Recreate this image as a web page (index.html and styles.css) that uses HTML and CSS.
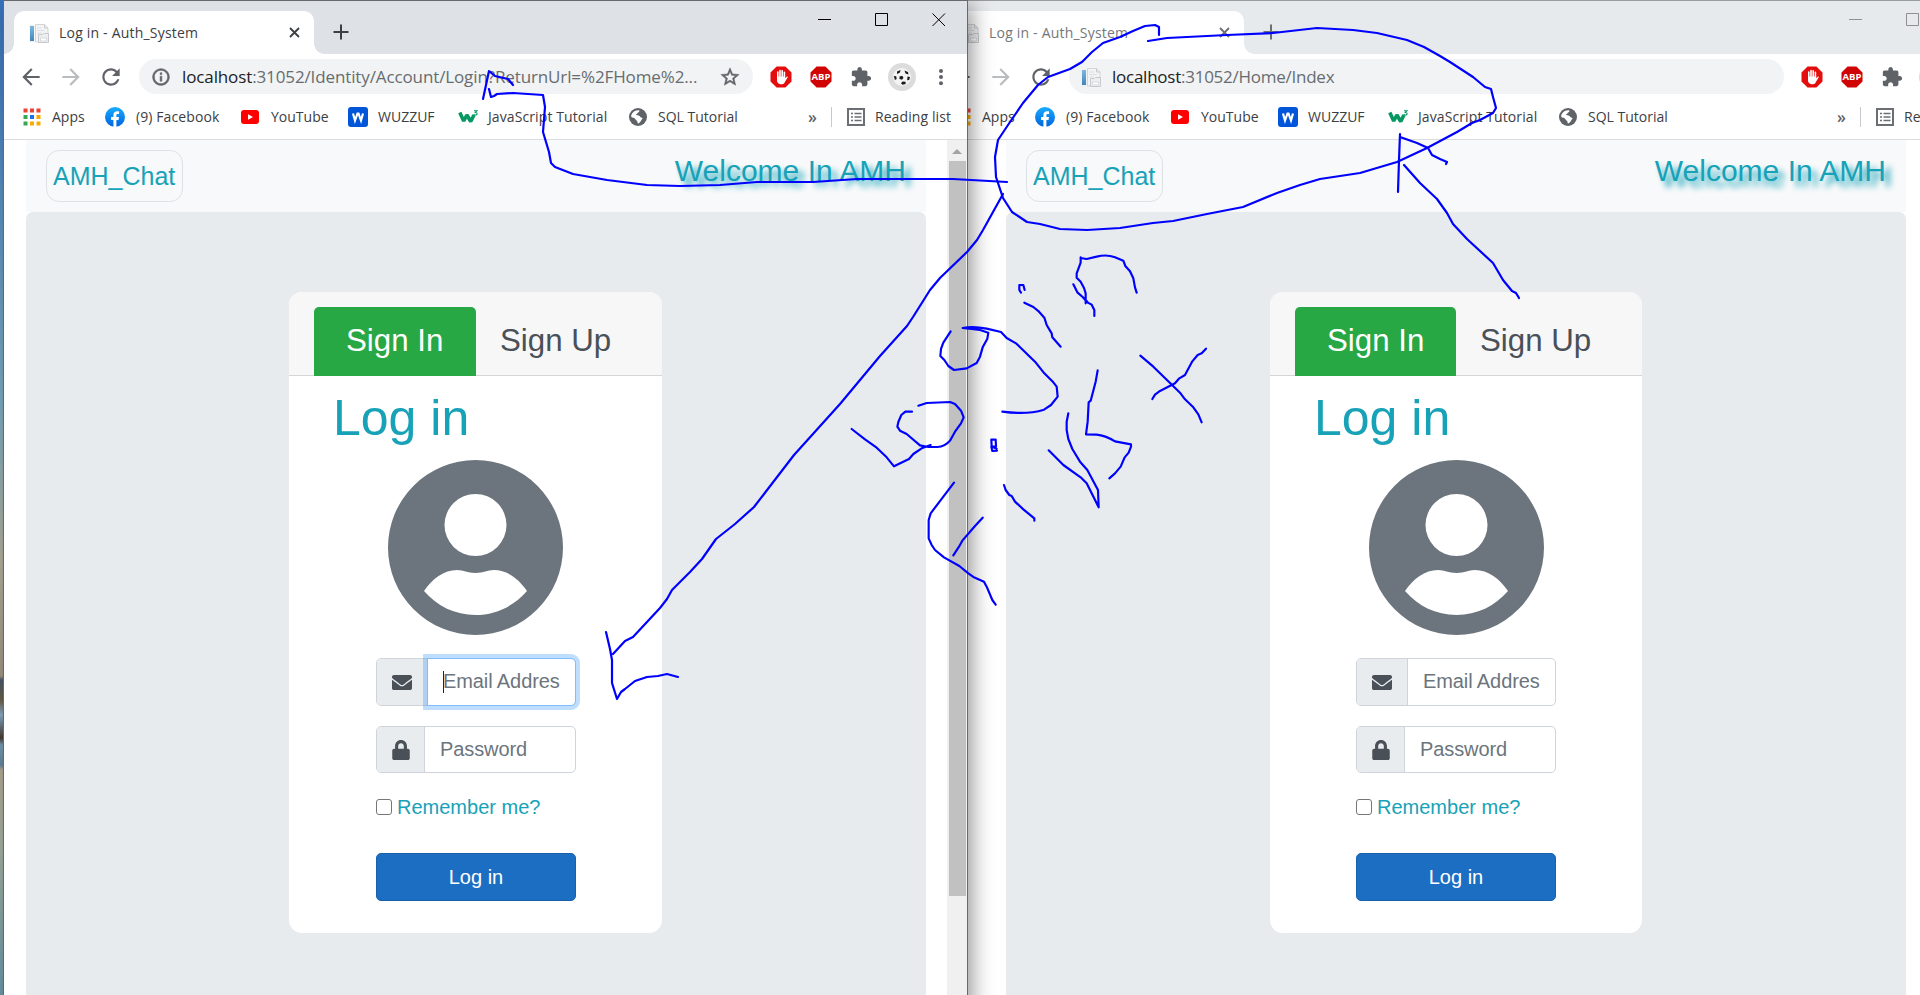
FILE: index.html
```
<!DOCTYPE html>
<html lang="en">
<head>
<meta charset="utf-8">
<title>Log in - Auth_System</title>
<link rel="stylesheet" href="styles.css">
</head>
<body>
<svg class="sprite" aria-hidden="true">
  <defs>
    <linearGradient id="fbg" x1="0" y1="0" x2="0" y2="1"><stop offset="0" stop-color="#18acfe"/><stop offset="1" stop-color="#0163e0"/></linearGradient>
    <linearGradient id="bar" x1="0" y1="0" x2="0" y2="1"><stop offset="0" stop-color="#7fb7dd"/><stop offset="1" stop-color="#3f86bd"/></linearGradient>
  </defs>
  <symbol id="favicon" viewBox="0 0 20 20"><rect x="0.5" y="2" width="5" height="17.500" fill="#eef1f4"/><rect x="1" y="3" width="4" height="15" fill="url(#bar)"/><path d="M6.500 1.500h9l3.500 3.500v14H6.500z" fill="#f4f4f5" stroke="#d3d5d8"/><path d="M15.500 1.500V5H19" fill="none" stroke="#c8cacd"/><path d="M8 5h5M8 7.500h8M8 10h5" stroke="#dcdfe3"/><path d="M9.500 11.500h4l1-1h5v9h-10z" fill="#eceef0" stroke="#c6c9cd"/><path d="M11.500 15h6v3h-6z" fill="#fff" stroke="#d8dade"/></symbol>
  <symbol id="back" viewBox="0 0 24 24"><path d="M20 11H7.830l5.590-5.590L12 4l-8 8 8 8 1.410-1.410L7.830 13H20v-2z"/></symbol>
  <symbol id="reload" viewBox="0 0 24 24"><path d="M17.650 6.350C16.200 4.900 14.210 4 12 4c-4.420 0-7.990 3.580-7.990 8s3.570 8 7.990 8c3.730 0 6.840-2.550 7.730-6h-2.080c-.82 2.330-3.040 4-5.650 4-3.310 0-6-2.690-6-6s2.690-6 6-6c1.660 0 3.140.69 4.220 1.780L13 11h7V4l-2.350 2.350z"/></symbol>
  <symbol id="info" viewBox="0 0 24 24"><path d="M11 17h2v-6h-2v6zm1-15C6.480 2 2 6.480 2 12s4.480 10 10 10 10-4.480 10-10S17.520 2 12 2zm0 18c-4.410 0-8-3.590-8-8s3.590-8 8-8 8 3.590 8 8-3.590 8-8 8zM11 9h2V7h-2v2z" stroke="#5f6368" stroke-width=".7"/></symbol>
  <symbol id="star" viewBox="0 0 24 24"><path d="M22 9.240l-7.190-.62L12 2 9.190 8.630 2 9.240l5.460 4.730L5.820 21 12 17.270 18.180 21l-1.630-7.030L22 9.240zM12 15.400l-3.760 2.270 1-4.280-3.320-2.880 4.380-.38L12 6.100l1.710 4.040 4.380.38-3.320 2.880 1 4.280L12 15.400z" stroke="#5f6368" stroke-width=".5"/></symbol>
  <symbol id="hand" viewBox="0 0 22 22"><path d="M6.600.5h8.800l6.100 6.100v8.800l-6.100 6.100H6.600L.5 15.400V6.600z" fill="#e40d0d"/><path d="M7.800 11.500V6M10 10.500V4.500M12.200 10.500V4.700M14.400 11V6.200" stroke="#fff" stroke-width="1.600" stroke-linecap="round"/><path d="M7 10.500h8.200v1.700l1.500-1.500c.8-.5 1.300.2.9.9l-3 5c-.5.9-1.200 1.600-2.600 1.600h-1.500c-2 0-3.500-1.500-3.500-3.600z" fill="#fff"/></symbol>
  <symbol id="octagon" viewBox="0 0 22 22"><path d="M6.600.5h8.800l6.100 6.100v8.800l-6.100 6.100H6.600L.5 15.400V6.600z" fill="#d00404"/></symbol>
  <symbol id="puzzle" viewBox="0 0 24 24"><path d="M20.500 11H19V7c0-1.100-.9-2-2-2h-4V3.500C13 2.120 11.880 1 10.500 1S8 2.120 8 3.500V5H4c-1.100 0-1.990.9-1.990 2v3.800H3.500c1.490 0 2.700 1.210 2.700 2.700s-1.210 2.700-2.700 2.700H2V20c0 1.100.9 2 2 2h3.800v-1.500c0-1.490 1.210-2.700 2.700-2.700 1.490 0 2.700 1.210 2.700 2.700V22H17c1.100 0 2-.9 2-2v-4h1.500c1.380 0 2.500-1.120 2.500-2.500S21.880 11 20.500 11z"/></symbol>
  <symbol id="ball" viewBox="0 0 28 28"><circle cx="14" cy="14" r="14" fill="#dcdcdc"/><circle cx="14" cy="14" r="9" fill="#f4f4f4"/><path d="M9 8.500l3.500-1.500-.5 2.500-3 1.500zM16.500 7.500l3.500 1.500.5 2.500-3-1zM5.800 13l2.400.3.500 2.700-1.800 1zM11.500 13.500l2.700-.8 1.300 2-1.500 2-2.500-.7zM19.500 13.500l2.500.5-.8 3-2 .3zM14.500 18.500l3 .2.200 2.300-3.200.8-1.500-1.500z" fill="#1c1c1c"/></symbol>
  <symbol id="dots" viewBox="0 0 6 18"><g><circle cx="3" cy="3" r="2"/><circle cx="3" cy="9.100" r="2"/><circle cx="3" cy="15.200" r="2"/></g></symbol>
  <symbol id="apps" viewBox="0 0 18 18"><path d="M.5.500h4v4h-4zM7 .5h4v4H7zM13.500.500h4v4h-4z" fill="#ea4335"/><path d="M.5 7h4v4h-4z M.5 13.500h4v4h-4z" fill="#34a853"/><path d="M7 7h4v4H7z" fill="#1a73e8"/><path d="M13.500 7h4v4h-4zM7 13.500h4v4H7zM13.500 13.500h4v4h-4z" fill="#f9ab00"/></symbol>
  <symbol id="facebook" viewBox="0 0 20 20"><circle cx="10" cy="10" r="10" fill="url(#fbg)"/><path d="M8.400 20v-7H6.100v-3h2.300V8.200c0-2.600 1.400-4 3.800-4 .7 0 1.400.1 1.900.2v2.500h-1.300c-1 0-1.400.5-1.400 1.400V10h2.600l-.5 3h-2.100v7z" fill="#fff"/></symbol>
  <symbol id="youtube" viewBox="0 0 18 14"><rect width="18" height="14" rx="3" fill="#f00"/><path d="M7 4.200v5.600L12 7z" fill="#fff"/></symbol>
  <symbol id="wuzzuf" viewBox="0 0 20 20"><rect width="20" height="20" rx="3" fill="#0055d9"/><path d="M5 6.500l2 7 2.500-7h1l2.500 7 2-7" fill="none" stroke="#fff" stroke-width="2.200"/></symbol>
  <symbol id="wthree" viewBox="0 0 20 20"><path d="M1.800 5.500L5.700 14l3.200-6 3.800 6.500 3.300-6.500" fill="none" stroke="#059862" stroke-width="3.600" stroke-linejoin="bevel"/><path d="M16 3.700h3l-1.600 1.700c2.400 0 2 3-.2 2.600-.7 0-1.200-.4-1.500-.8" fill="none" stroke="#059862" stroke-width="1.100"/></symbol>
  <symbol id="globe" viewBox="0 0 18 18"><circle cx="9" cy="9" r="9" fill="#5f6368"/><path d="M10 2.300c.9.800.2 1.800-.8 2.100-1 .3-.4 1.300-1.400 1.500-.9.200-1.100.7-.4 1.100 1.400.6 3.200.3 3.800 1.700.3 1 1.600.6 2.200 1.300.4.700-.6 1.300-1 2-.6 1.200-1.500 2.700-3.100 3.400-.9.200-.6-1.200-.9-2-.5-1-1.900-1.200-2.100-2.300-.8-1-2.900-1.400-4-2C1.800 5.500 5.300 1.900 10 2.300z" fill="#fff"/></symbol>
  <symbol id="list" viewBox="0 0 18 18"><rect x="1" y="1" width="16" height="16" fill="none" stroke="#6b6f73" stroke-width="2"/><path d="M4 5.500h2M7.500 5.500h7M4 9h2M7.500 9h7M4 12.500h2M7.500 12.500h7" stroke="#6b6f73" stroke-width="1.600"/></symbol>
  <symbol id="avatar" viewBox="0 0 175 175"><path fill-rule="evenodd" fill="#6c757d" d="M87.500 0a87.500 87.500 0 1 0 0 175a87.500 87.500 0 1 0 0-175zM87.500 34a31 31 0 1 1 0 62a31 31 0 1 1 0-62zM36 131C44 119 56 110 69 110C76 110 79 113 87.500 113C96 113 99 110 106 110C119 110 131 119 139 131C126 146 108 155 87.500 155S49 146 36 131z"/></symbol>
  <symbol id="mail" viewBox="0 64 512 384"><path d="M502.300 190.800c3.900-3.100 9.700-.2 9.700 4.700V400c0 26.500-21.500 48-48 48H48c-26.500 0-48-21.500-48-48V195.600c0-5 5.700-7.800 9.700-4.700 22.400 17.400 52.100 39.500 154.100 113.600 21.100 15.400 56.700 47.800 92.200 47.600 35.700.3 72-32.800 92.300-47.600 102-74.100 131.600-96.300 154-113.700zM256 320c23.200.4 56.600-29.200 73.400-41.400 132.700-96.300 142.800-104.700 173.400-128.700 5.800-4.500 9.200-11.500 9.200-18.900v-19c0-26.500-21.500-48-48-48H48c-26.500 0-48 21.500-48 48v19c0 7.400 3.400 14.300 9.200 18.900 30.600 23.900 40.700 32.400 173.400 128.700 16.800 12.200 50.200 41.800 73.400 41.400z"/></symbol>
  <symbol id="lock" viewBox="0 0 448 512"><path d="M400 224h-24v-72C376 68.200 307.800 0 224 0S72 68.200 72 152v72H48c-26.500 0-48 21.500-48 48v192c0 26.500 21.500 48 48 48h352c26.500 0 48-21.500 48-48V272c0-26.500-21.500-48-48-48zm-104 0H152v-72c0-39.700 32.300-72 72-72s72 32.300 72 72v72z"/></symbol>
</svg>

<div class="desktop">
  <section class="window window-back">
    <header class="titlebar">
      <div class="tab"><svg class="tab-icon"><use href="#favicon"/></svg><span class="tab-title">Log in - Auth_System</span><svg class="tab-close" viewBox="0 0 11 11"><path d="M1 1l9 9M10 1l-9 9"/></svg></div>
      <svg class="new-tab" viewBox="0 0 16 16"><path d="M8 .5v15M.5 8h15"/></svg>
      <div class="controls">
        <svg viewBox="0 0 14 14"><path d="M0 6.500h13"/></svg>
        <svg viewBox="0 0 14 14"><path d="M.5.500h12v12H.5z"/></svg>
        <svg viewBox="0 0 14 14"><path d="M.5.500l12.500 12.500M13 .5L.5 13"/></svg>
      </div>
    </header>
    <div class="toolbar">
      <svg class="nav"><use href="#back"/></svg><svg class="nav forward"><use href="#back"/></svg><svg class="nav"><use href="#reload"/></svg>
      <div class="address"><svg class="site"><use href="#favicon"/></svg><span class="url url-short"><b>localhost</b>:31052/Home/Index</span></div>
      <svg class="ext"><use href="#hand"/></svg>
      <span class="abp"><svg class="ext"><use href="#octagon"/></svg><span>ABP</span></span>
      <svg class="puzzle"><use href="#puzzle"/></svg><svg class="ball"><use href="#ball"/></svg><svg class="dots"><use href="#dots"/></svg>
    </div>
    <nav class="bookmarks">
      <svg class="i18"><use href="#apps"/></svg><span class="b-apps">Apps</span>
      <svg class="i20"><use href="#facebook"/></svg><span class="b-fb">(9) Facebook</span>
      <svg class="yt"><use href="#youtube"/></svg><span class="b-yt">YouTube</span>
      <svg class="i20"><use href="#wuzzuf"/></svg><span class="b-wz">WUZZUF</span>
      <svg class="i20"><use href="#wthree"/></svg><span class="b-js">JavaScript Tutorial</span>
      <svg class="i18"><use href="#globe"/></svg><span class="b-sql">SQL Tutorial</span>
      <span class="more">»</span><svg class="list i18"><use href="#list"/></svg><span class="b-read">Reading list</span>
    </nav>
    <main class="page">
      <div class="container">
        <div class="site-head"><a class="brand">AMH_Chat</a><h2 class="welcome">Welcome In AMH</h2></div>
        <div class="stage">
          <div class="card">
            <div class="card-head"><a class="pill active">Sign In</a><a class="pill">Sign Up</a></div>
            <h1>Log in</h1>
            <svg class="avatar"><use href="#avatar"/></svg>
            <form>
              <div class="field"><span class="addon addon-mail"><svg><use href="#mail"/></svg></span><span class="input"><span>Email Address</span></span></div>
              <div class="field field-pass"><span class="addon addon-lock"><svg><use href="#lock"/></svg></span><span class="input"><span>Password</span></span></div>
              <label><i class="check"></i>Remember me?</label>
              <button type="button">Log in</button>
            </form>
          </div>
        </div>
      </div>
    </main>
  </section>

  <section class="window window-front">
    <header class="titlebar">
      <div class="tab"><svg class="tab-icon"><use href="#favicon"/></svg><span class="tab-title">Log in - Auth_System</span><svg class="tab-close" viewBox="0 0 11 11"><path d="M1 1l9 9M10 1l-9 9"/></svg></div>
      <svg class="new-tab" viewBox="0 0 16 16"><path d="M8 .5v15M.5 8h15"/></svg>
      <div class="controls">
        <svg viewBox="0 0 14 14"><path d="M0 6.500h13"/></svg>
        <svg viewBox="0 0 14 14"><path d="M.5.500h12v12H.5z"/></svg>
        <svg viewBox="0 0 14 14"><path d="M.5.500l12.500 12.500M13 .5L.5 13"/></svg>
      </div>
    </header>
    <div class="toolbar">
      <svg class="nav"><use href="#back"/></svg><svg class="nav forward"><use href="#back"/></svg><svg class="nav"><use href="#reload"/></svg>
      <div class="address"><svg class="site"><use href="#info"/></svg><span class="url url-long"><b>localhost</b>:31052/Identity/Account/Login?ReturnUrl=%2FHome%2...</span><svg class="star"><use href="#star"/></svg></div>
      <svg class="ext"><use href="#hand"/></svg>
      <span class="abp"><svg class="ext"><use href="#octagon"/></svg><span>ABP</span></span>
      <svg class="puzzle"><use href="#puzzle"/></svg><svg class="ball"><use href="#ball"/></svg><svg class="dots"><use href="#dots"/></svg>
    </div>
    <nav class="bookmarks">
      <svg class="i18"><use href="#apps"/></svg><span class="b-apps">Apps</span>
      <svg class="i20"><use href="#facebook"/></svg><span class="b-fb">(9) Facebook</span>
      <svg class="yt"><use href="#youtube"/></svg><span class="b-yt">YouTube</span>
      <svg class="i20"><use href="#wuzzuf"/></svg><span class="b-wz">WUZZUF</span>
      <svg class="i20"><use href="#wthree"/></svg><span class="b-js">JavaScript Tutorial</span>
      <svg class="i18"><use href="#globe"/></svg><span class="b-sql">SQL Tutorial</span>
      <span class="more">»</span><svg class="list i18"><use href="#list"/></svg><span class="b-read">Reading list</span>
    </nav>
    <main class="page">
      <div class="container">
        <div class="site-head"><a class="brand">AMH_Chat</a><h2 class="welcome">Welcome In AMH</h2></div>
        <div class="stage">
          <div class="card">
            <div class="card-head"><a class="pill active">Sign In</a><a class="pill">Sign Up</a></div>
            <h1>Log in</h1>
            <svg class="avatar"><use href="#avatar"/></svg>
            <form>
              <div class="field"><span class="addon addon-mail"><svg><use href="#mail"/></svg></span><span class="input focused"><span>Email Address</span></span></div>
              <div class="field field-pass"><span class="addon addon-lock"><svg><use href="#lock"/></svg></span><span class="input"><span>Password</span></span></div>
              <label><i class="check"></i>Remember me?</label>
              <button type="button">Log in</button>
            </form>
          </div>
        </div>
      </div>
      <div class="scrollbar"><i class="arrow"></i><i class="thumb"></i></div>
    </main>
  </section>

  <svg class="ink" viewBox="0 0 1920 995">
    <path d="M483 99L489 71L495 76L508 79L513 85M489 89L491 97L494 96L497 94L513 93L543 95L545 107L543 132L549 152L551 163L555 167L573 174L607 180L647 185L680 186L720 185L757 182L813 182L857 179L953 179L1007 182"/>
    <path d="M1159 35V27L1155 25L1145 26L1133 31L1120 37L1103 43L1092 52L1082 62L1070 69L1048 77L1038 85L1023 103L1008 125L998 140L995 157L996 177L1003 198L1012 212L1027 222L1040 224L1060 229L1087 230L1120 228L1153 223L1173 221L1207 214L1243 207L1277 193L1300 185L1320 179L1360 173L1397 162L1427 148L1457 132L1472 123L1480 120L1493 113L1496 108L1493 97L1491 89L1485 87L1473 77L1450 62L1440 56L1424 47L1407 40L1377 33L1353 30L1317 28L1273 33L1227 35L1167 38L1148 41"/>
    <path d="M1400 134L1399 160L1398 192M1400 137L1417 143L1428 148L1432 155L1440 159L1447 162L1446 164M1404 165L1420 183L1437 199L1447 213L1453 224L1467 239L1493 263L1503 280L1512 291L1516 293L1519 298"/>
    <path d="M1003 194L983 230L977 240L967 252L940 278L930 290L913 317L907 326L880 356L840 404L794 455L754 507L735 524L716 539L702 559L690 572L672 590L667 599L660 608L633 637L625 641L613 654M606 632L610 649L612 660L612 683L617 699L621 692L625 689L635 681L647 677L658 676L667 674L678 677"/>
    <g class="scribble" transform="translate(840 230) scale(.33333)">
      <path d="M722 82L722 98L710 130V143L722 155L732 174L737 190V220M722 84L740 87L770 80Q800 72 825 82L850 92L856 108L870 124L880 145L885 172L890 188M700 163L712 187L728 201L742 217L755 224L763 240V258M728 201L742 215"/>
      <path d="M543 188L538 180V165H550L554 180M553 218L580 231L597 245L613 263L620 285L635 310L637 322L662 350"/>
      <path d="M332 304L310 338L303 357L301 378L313 390L325 408L342 420L380 415L410 399L420 380L428 352L442 326L445 308L420 300L368 294Q400 288 440 296L483 306L500 324L528 340L585 395L613 430L640 457L650 470L653 500L633 525L612 539Q560 555 487 545"/>
      <path d="M235 527L260 519L330 516L345 522L363 542L371 562L363 580L345 605L330 632Q315 650 292 651H265L240 646L200 612L180 602L172 590L175 576L184 555L196 545H216M272 645L245 655L220 672L207 687L162 709L140 682L110 653L75 628L35 597"/>
      <path d="M454 629H467L468 650H455ZM454 650L457 663L471 662M460 652L470 656"/>
      <path d="M773 421L767 455L752 512L746 517L743 575L738 613L770 614Q795 616 825 634L873 643V650L866 668L854 682L842 710L825 730L808 745M685 550L680 575V600L685 627L697 657L720 695L742 720L774 780L776 832L740 760L722 742L670 705L626 661"/>
      <path d="M901 377L940 410L994 463L1020 488L1035 508L1060 532L1075 553L1085 577M1098 356L1085 370L1073 375L1057 394L1035 435L1018 445L1005 460L960 483L945 494L937 507"/>
      <path d="M492 765L497 780L508 795L515 798L525 815L550 838L583 865V872M342 758L272 850L266 870V925L275 945L285 960L312 982L358 1008L385 1030L400 1041L432 1055L440 1070L457 1110L467 1124M428 863L405 888L367 932L357 950L340 976"/>
    </g>
  </svg>
</div>
</body>
</html>
```
FILE: styles.css
```
* { box-sizing: border-box; }
body { margin: 0; overflow: hidden; font-family: "Liberation Sans", Arial, sans-serif; }
h1, h2 { margin: 0; font-weight: 400; }
svg { display: block; flex: none; }
.sprite { position: absolute; width: 0; height: 0; }

.desktop {
  position: relative;
  width: 1920px;
  height: 995px;
  overflow: hidden;
  background: linear-gradient(#3a76c4 0, #5b93c9 180px, #7fb2c9 400px, #b8b6a2 560px, #a79c88 676px, #4f5c70 680px, #6d624c 700px, #8fb3cf 715px, #4a3d33 738px, #7ba4be 745px, #6d8ba3 765px, #b9b09a 770px, #a9b7a8 850px, #6e9fb0 995px);
}

.window {
  position: absolute;
  top: 0;
  height: 1010px;
  display: flex;
  flex-direction: column;
  border: 1px solid #68696c;
  background: #fff;
}
.window-front { left: 3px; width: 965px; box-shadow: 4px 4px 20px rgba(0, 0, 0, .42); }
.window-back { left: 933px; width: 1066px; border-color: #999b9e; }

.titlebar { display: flex; flex: none; height: 53px; padding-left: 10px; background: #dee1e6; }
.window-back .titlebar { background: #e7eaed; }
.tab {
  position: relative;
  display: flex;
  align-items: center;
  width: 300px;
  height: 43px;
  margin-top: 10px;
  padding: 0 14px 0 15px;
  border-radius: 10px 10px 0 0;
  background: #fff;
}
.tab::before, .tab::after { content: ""; position: absolute; bottom: 0; width: 10px; height: 10px; }
.tab::before { left: -10px; background: radial-gradient(circle at 0 0, transparent 9.500px, #fff 10px); }
.tab::after { right: -10px; background: radial-gradient(circle at 100% 0, transparent 9.500px, #fff 10px); }
.tab-icon { width: 20px; height: 20px; margin-right: 10px; }
.tab-title { flex: 1; font: 14px/20px "Open Sans", sans-serif; color: #3c4043; white-space: nowrap; letter-spacing: .2px; }
.tab-close { width: 11px; height: 11px; stroke: #3c4043; stroke-width: 1.800; }
.new-tab { width: 16px; height: 16px; margin: 23px 0 0 19px; stroke: #3c4043; stroke-width: 2; }
.controls { display: flex; gap: 43px; margin: 12px 21px 0 auto; fill: none; stroke: #000; }
.controls svg { width: 14px; height: 14px; }
.window-back .tab-title { color: #75787b; }
.window-back .tab-close, .window-back .new-tab { stroke: #6b6e72; }
.window-back .controls { stroke: #8e9093; }

.toolbar { display: flex; flex: none; align-items: center; height: 45px; padding: 0 23px 0 14px; fill: #5f6368; }
.nav { width: 26px; height: 26px; margin-right: 14px; }
.forward { transform: scaleX(-1); fill: #babcbe; }
.address {
  display: flex;
  flex: 1;
  align-items: center;
  height: 35px;
  margin-left: 1px;
  padding: 0 12px;
  border-radius: 18px;
  background: #f1f3f4;
}
.site { width: 20px; height: 20px; margin-right: 11px; }
.url { flex: 1; min-width: 0; font: 17px/24px "Open Sans", sans-serif; color: #686c70; white-space: nowrap; }
.url b { font-weight: 400; color: #202124; }
.url-long { letter-spacing: -.12px; }
.url-short { letter-spacing: -.25px; }
.star { width: 22px; height: 22px; }
.ext { width: 22px; height: 22px; }
.address + .ext { margin-left: 17px; }
.abp { position: relative; margin-left: 18px; }
.abp span { position: absolute; inset: 0; font: bold 9.500px/22px "Open Sans", sans-serif; text-align: center; color: #fff; }
.puzzle { width: 22px; height: 22px; margin-left: 18px; }
.ball { width: 28px; height: 28px; margin-left: 16px; }
.dots { width: 6px; height: 18px; margin-left: 22px; }

.bookmarks {
  display: grid;
  grid-template-columns: 29px 53px 31px 105px 30px 77px 30px 80px 30px 141px 29px 150px 1fr 44px 94px;
  flex: none;
  align-items: center;
  height: 41px;
  padding: 0 0 5px 19px;
  border-bottom: 1px solid #dadce0;
  font: 14px/20px "Open Sans", sans-serif;
  color: #3c4043;
  white-space: nowrap;
}
.i18 { width: 18px; height: 18px; }
.i20 { width: 20px; height: 20px; }
.yt { width: 18px; height: 14px; }
.b-fb, .b-js { letter-spacing: .1px; }
.b-read { letter-spacing: .1px; }
.more { justify-self: end; padding-right: 14px; font-size: 16px; font-weight: 600; color: #5f6368; }
.list { width: 34px; height: 20px; padding-left: 15px; border-left: 1px solid #c6c9cd; }

.page { display: flex; flex: 1; min-height: 0; padding-left: 22px; }
.window-back .page { padding-left: 72px; }
.container { display: flex; flex: none; flex-direction: column; width: 900px; }
.site-head { display: flex; flex: none; justify-content: space-between; height: 72px; padding: 10px 20px; background: #f8f9fa; }
.brand { width: 137px; height: 52px; padding: 0 6px; border: 1px solid #dee2e6; border-radius: 13px; font-size: 25px; line-height: 51px; color: #17a2b8; }
.welcome { font-size: 30px; line-height: 42px; color: #17a2b8; text-shadow: 6px 6px 6px #17a2b8; }
.stage { flex: 1; padding: 80px 0 0 263px; border-radius: 7px 7px 0 0; background: #e7ebee; }

.card { display: flex; flex-direction: column; width: 373px; height: 641px; overflow: hidden; border-radius: 13px; background: #fff; }
.window-back .card { width: 372px; margin-left: 1px; }
.card-head { display: flex; flex: none; height: 84px; padding: 15px 25px 0; border-bottom: 1px solid #d5d6d8; background: #f7f7f7; }
.pill { height: 69px; padding: 0 24px; font-size: 31.250px; line-height: 68px; color: #495057; white-space: nowrap; }
.pill.active { flex: none; width: 162px; padding: 0 32px; border-radius: 5px 5px 0 0; background: #28a745; color: #fff; }
.window-back .pill.active { width: 161px; }
.card h1 { margin: 12px 0 2px 44px; font-size: 50px; line-height: 60px; color: #17a2b8; }
.avatar { width: 175px; height: 175px; margin: 10px 0 0 99px; }
form { display: flex; flex-direction: column; width: 200px; margin: 23px 0 0 87px; }
.window-back form { margin-left: 86px; }
.window-back .avatar { margin-left: 98.500px; }
.field { display: flex; height: 48px; border: 1px solid #ced4da; border-radius: 5px; }
.field-pass { height: 47px; margin-top: 20px; }
.addon { display: flex; flex: none; align-items: center; padding-left: 15px; border-radius: 4px 0 0 4px; background: #e9ecef; border-right: 1px solid #ced4da; fill: #495057; }
.addon-mail { width: 51px; }
.addon-lock { width: 48px; }
.addon-mail svg { width: 20px; height: 15px; }
.addon-lock svg { width: 18px; height: 20px; }
.input { display: block; flex: 1; min-width: 0; padding: 0 15px 0 15px; font-size: 20px; line-height: 45px; color: #6c757d; }
.input > span { display: block; overflow: hidden; white-space: nowrap; letter-spacing: -.1px; }
.focused { position: relative; margin: -1px; border: 1px solid #80bdff; border-radius: 0 5px 5px 0; background: #fff; box-shadow: 0 0 0 4px rgba(0, 123, 255, .25); z-index: 1; }
.focused::before { content: ""; position: absolute; left: 15px; top: 12px; width: 1px; height: 22px; background: #222; }
label { display: flex; align-items: center; height: 24px; margin-top: 22px; font-size: 20px; color: #17a2b8; white-space: nowrap; }
.check { width: 16px; height: 16px; margin-right: 5px; border: 1px solid #767676; border-radius: 3px; }
button { height: 48px; margin-top: 34px; padding: 0; border: 1px solid #1861ac; border-radius: 5px; background: #1b6ec2; color: #fff; font: 20px/44px "Liberation Sans", Arial, sans-serif; }

.scrollbar { display: flex; flex-direction: column; align-items: center; width: 20px; margin-left: auto; background: #f0f0f0; }
.arrow { width: 0; height: 0; margin: 9px 0 7px; border: 5px solid transparent; border-top: 0; border-bottom-color: #a3a3a3; }
.thumb { width: 17px; height: 735px; background: #c1c1c1; }

.ink { position: absolute; inset: 0; width: 1920px; height: 995px; fill: none; stroke: #00f; stroke-width: 2.200; stroke-linecap: round; stroke-linejoin: round; pointer-events: none; }
.scribble { stroke-width: 6.500; }
```
